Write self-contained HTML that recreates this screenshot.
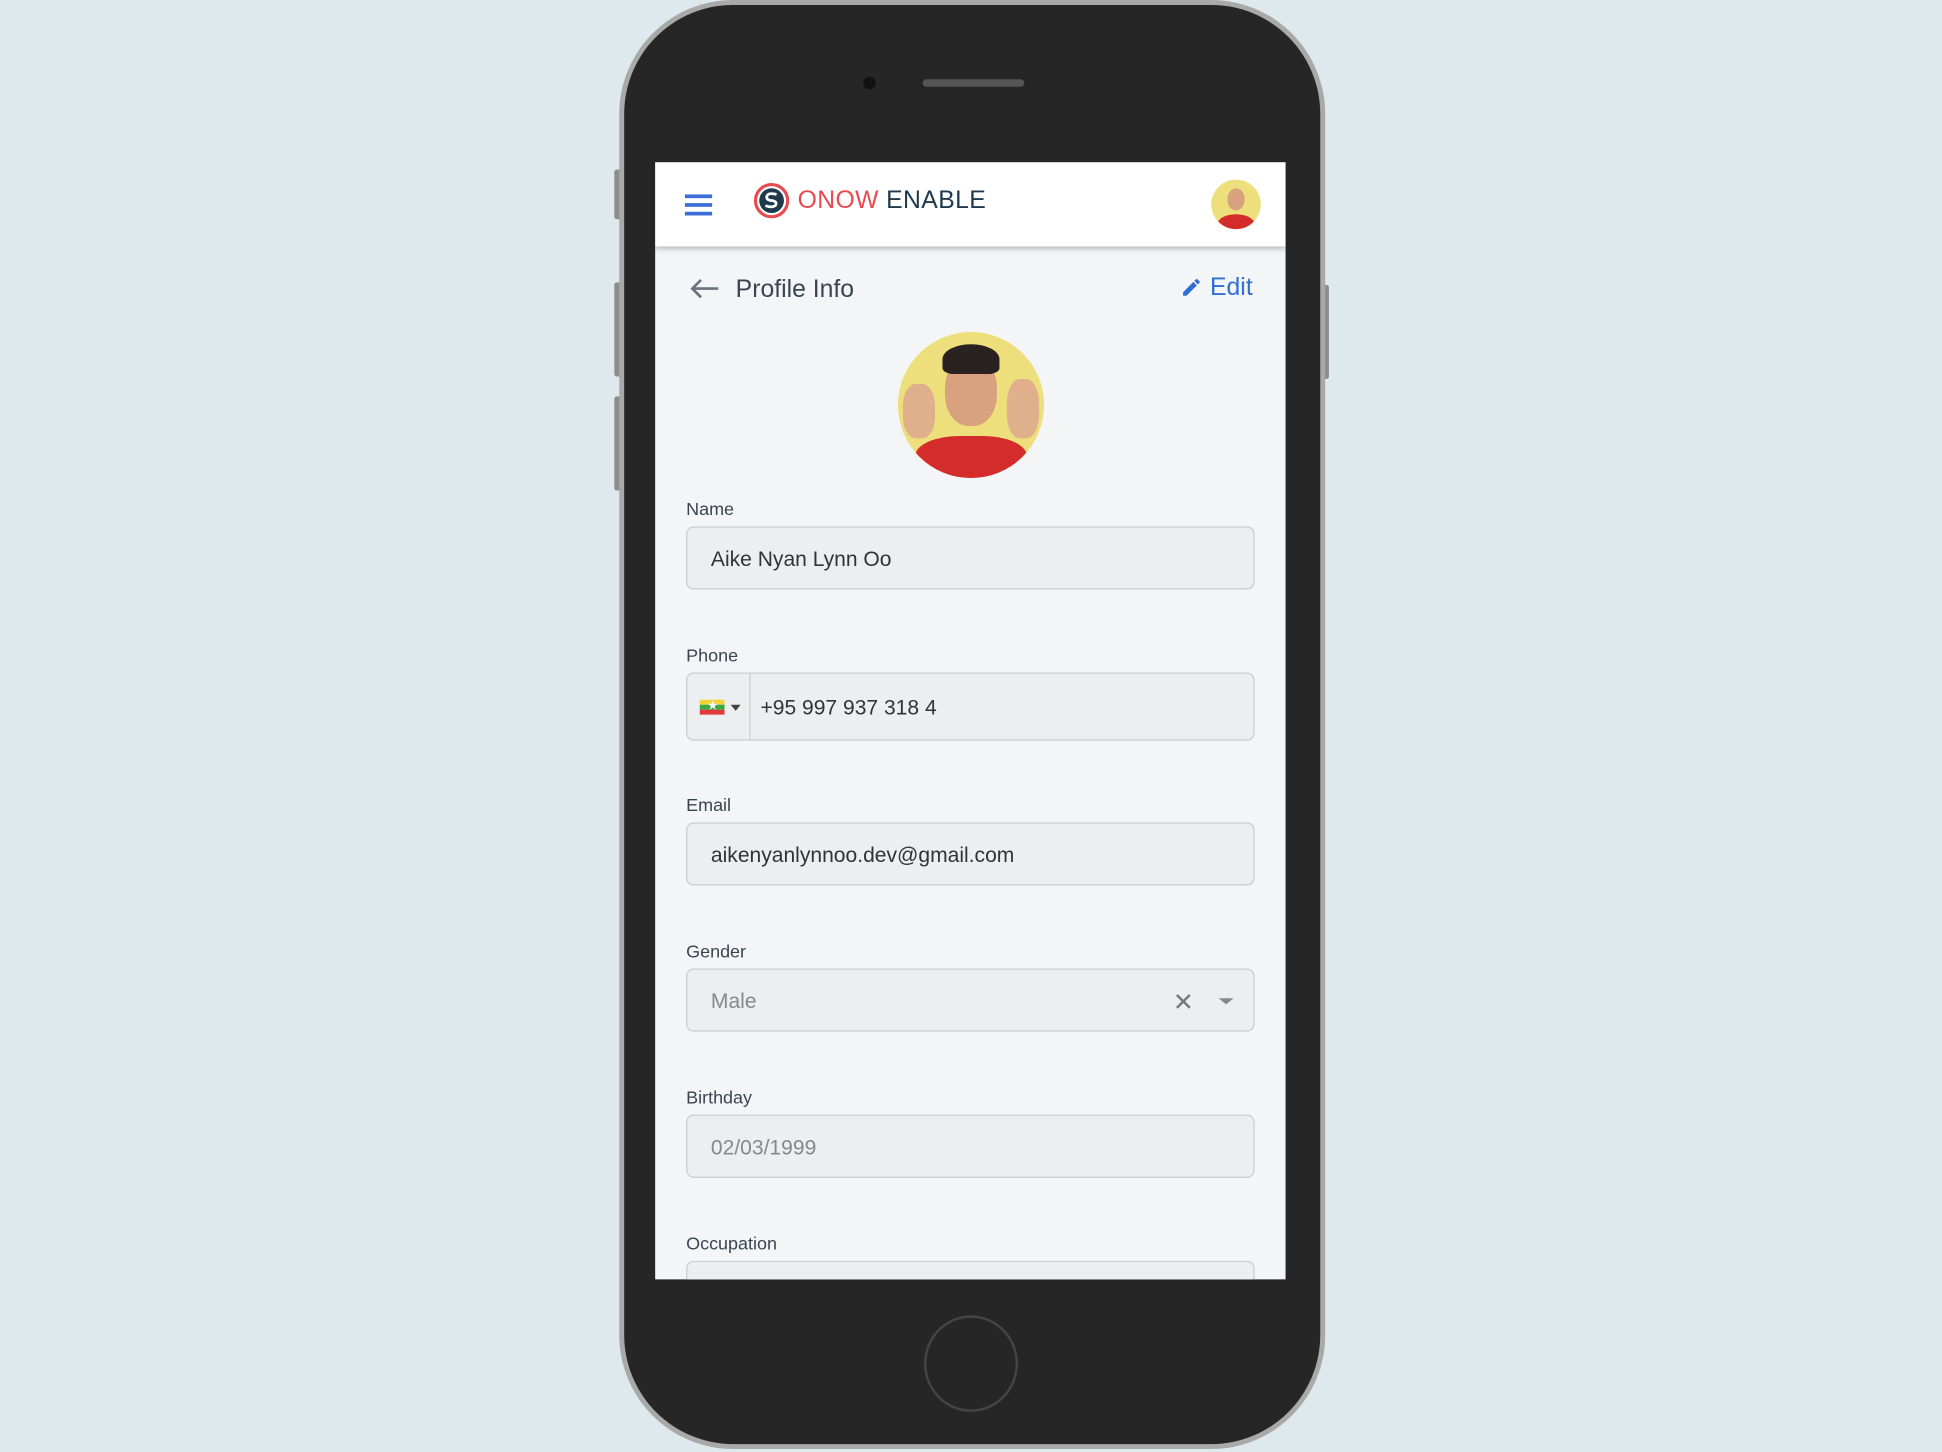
<!DOCTYPE html>
<html><head><meta charset="utf-8"><style>
html,body{margin:0;padding:0;width:1942px;height:1452px;overflow:hidden;background:#dee9ee;font-family:"Liberation Sans",sans-serif}
#w{position:absolute;left:0;top:0;width:1568px;height:1172px;transform:scale(1.2385);transform-origin:0 0}
.a{position:absolute}
.lbl{position:absolute;left:554px;font-size:14.5px;color:#3d4451}
.inp{position:absolute;left:554px;width:459px;height:50px;background:#eceef0;border:1px solid #c9ccd0;border-radius:6px;box-sizing:border-box}
.inp span{position:absolute;left:19px;top:16px;font-size:17px;color:#333}
</style></head><body><div id="w">
<div class="a" style="left:496px;top:137px;width:6px;height:40px;background:#8d8d8d;border-radius:2px"></div>
<div class="a" style="left:496px;top:228px;width:6px;height:76px;background:#8d8d8d;border-radius:2px"></div>
<div class="a" style="left:496px;top:320px;width:6px;height:76px;background:#8d8d8d;border-radius:2px"></div>
<div class="a" style="left:1067px;top:230px;width:6px;height:76px;background:#8d8d8d;border-radius:2px"></div>
<div class="a" style="left:500px;top:0;width:570px;height:1170px;border-radius:92px;background:#a9a9a9"></div>
<div class="a" style="left:504px;top:4px;width:562px;height:1162px;border-radius:88px;background:#262626"></div>
<div class="a" style="left:697px;top:62px;width:10px;height:10px;border-radius:50%;background:#111"></div>
<div class="a" style="left:745px;top:64px;width:82px;height:6px;border-radius:3px;background:#555"></div>
<div class="a" style="left:746px;top:1062px;width:76px;height:78px;border-radius:50%;border:2px solid #444;box-sizing:border-box"></div>
<div class="a" style="left:529px;top:131px;width:509px;height:902px;background:#f3f5f7;overflow:hidden">
 <div class="a" style="left:0;top:0;width:509px;height:68px;background:#fff;box-shadow:0 2px 4px rgba(0,0,0,.25)"></div>
 <div class="a" style="left:24px;top:26px;width:22px;height:2.5px;background:#3b6fd6;box-shadow:0 7px 0 #3b6fd6,0 14px 0 #3b6fd6"></div>
 <svg class="a" style="left:79px;top:16px" width="30" height="30" viewBox="0 0 30 30"><circle cx="15" cy="15" r="13" fill="none" stroke="#e84a4f" stroke-width="2.5"/><circle cx="15" cy="15" r="10" fill="#1f3a4c"/><path d="M19 10 Q12 8 11 12 Q11 15 16 15 Q20 16 18 19 Q15 21 10 19" stroke="#fff" stroke-width="2.2" fill="none"/></svg>
 <div class="a" style="left:115px;top:20px;font-size:20px;letter-spacing:.3px"><span style="color:#e84a4f">ONOW</span> <span style="color:#1f3a4c">ENABLE</span></div>
 <div class="a" style="left:449px;top:14px;width:40px;height:40px;border-radius:50%;background:#ede07c;overflow:hidden"><div class="a" style="left:13px;top:7px;width:14px;height:18px;border-radius:50%;background:#d9a27f"></div><div class="a" style="left:5px;top:28px;width:30px;height:16px;border-radius:50% 50% 0 0;background:#d42b2b"></div></div>
 <svg class="a" style="left:27px;top:93px" width="26" height="18" viewBox="0 0 26 18"><path d="M24 9H3M10 2L3 9l7 7" stroke="#6b7280" stroke-width="2.2" fill="none"/></svg>
 <div class="a" style="left:65px;top:92px;font-size:20px;color:#3d4451">Profile Info</div>
 <svg class="a" style="left:424px;top:92px" width="18" height="18" viewBox="0 0 24 24"><path d="M3 17.25V21h3.75L17.81 9.94l-3.75-3.75L3 17.25zM20.71 7.04a1 1 0 000-1.41l-2.34-2.34a1 1 0 00-1.41 0l-1.83 1.83 3.75 3.75 1.83-1.83z" fill="#2f6fd6"/></svg>
 <div class="a" style="left:448px;top:90px;font-size:20px;color:#2f6fd6">Edit</div>
 <div class="a" style="left:196px;top:137px;width:118px;height:118px;border-radius:50%;background:#ede07c;overflow:hidden">
  <div class="a" style="left:38px;top:20px;width:42px;height:56px;border-radius:45%;background:#d9a27f"></div>
  <div class="a" style="left:36px;top:10px;width:46px;height:24px;border-radius:50% 50% 20% 20%;background:#2a2220"></div>
  <div class="a" style="left:4px;top:42px;width:26px;height:44px;border-radius:40%;background:#e0b08c"></div>
  <div class="a" style="left:88px;top:38px;width:26px;height:48px;border-radius:40%;background:#e0b08c"></div>
  <div class="a" style="left:14px;top:84px;width:90px;height:40px;border-radius:40% 40% 0 0;background:#d42b2b"></div>
 </div>
</div>
<div style="position:absolute;left:0;top:0">
<div class="lbl" style="top:404px">Name</div>
<div class="inp" style="top:425px;height:51px"><span>Aike Nyan Lynn Oo</span></div>
<div class="lbl" style="top:522px">Phone</div>
<div class="inp" style="top:543px;height:55px">
 <div class="a" style="left:50px;top:0;width:1px;height:53px;background:#c9ccd0"></div>
 <div class="a" style="left:10px;top:21px;width:20px;height:4px;background:#f2d43a"></div>
 <div class="a" style="left:10px;top:25px;width:20px;height:4px;background:#3aa844"></div>
 <div class="a" style="left:10px;top:29px;width:20px;height:4px;background:#e03b3b"></div>
 <div class="a" style="left:16px;top:21px;font-size:10px;color:#fff;line-height:12px">★</div>
 <div class="a" style="left:35px;top:25px;border:4px solid transparent;border-top:5px solid #444"></div>
 <span style="left:59px;top:18px">+95 997 937 318 4</span>
</div>
<div class="lbl" style="top:643px">Email</div>
<div class="inp" style="top:664px;height:51px"><span>aikenyanlynnoo.dev@gmail.com</span></div>
<div class="lbl" style="top:761px">Gender</div>
<div class="inp" style="top:782px;height:51px"><span style="color:#888">Male</span>
 <span style="left:392px;top:14px;font-size:20px;color:#777">✕</span>
 <div class="a" style="left:429px;top:23px;border:6px solid transparent;border-top:5px solid #888"></div>
</div>
<div class="lbl" style="top:879px">Birthday</div>
<div class="inp" style="top:900px;height:51px"><span style="color:#888">02/03/1999</span></div>
<div class="lbl" style="top:997px">Occupation</div>
<div style="position:absolute;left:529px;top:1018px;width:509px;height:15px;overflow:hidden"><div class="inp" style="left:25px;top:0;height:51px"></div></div>
</div>
</div></body></html>
